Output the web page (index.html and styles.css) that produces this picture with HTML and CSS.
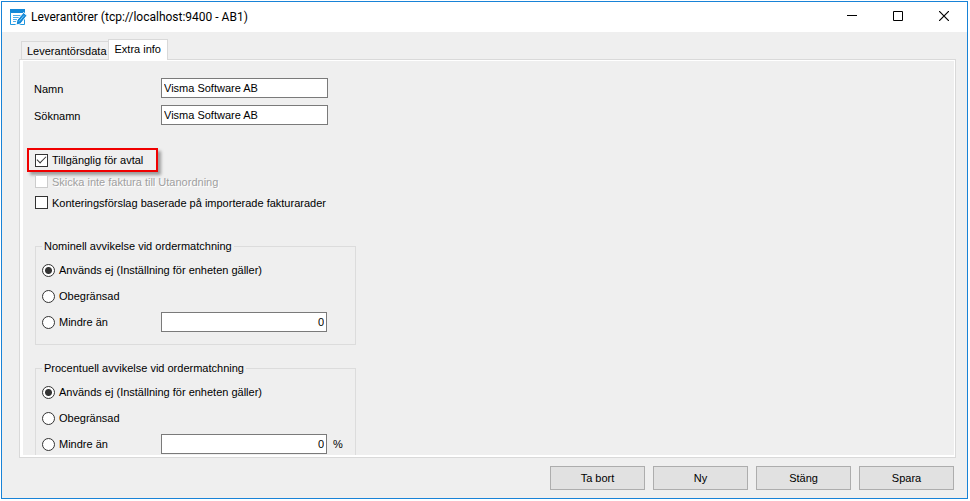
FILE: index.html
```html
<!DOCTYPE html>
<html lang="sv">
<head>
<meta charset="utf-8">
<title>Leverantörer</title>
<link rel="stylesheet" href="styles.css">
</head>
<body>
<div class="window">
  <header class="titlebar">
    <svg class="app-icon" width="17" height="17" viewBox="0 0 17 17" aria-hidden="true">
      <path d="M0 0h15v4H0z" fill="#1489d8"/>
      <path d="M1 4h13v11H1z" fill="#fff"/>
      <path d="M.5 3v12.500h14V3" fill="none" stroke="#1f97e0"/>
      <path d="M3 6.500h8M3 8.500h6M3 10.500h4M3 12.500h3" stroke="#4dacea"/>
      <path d="M6 16l1-5L13.500 3.500l3.500 3L10.500 15z" fill="#1489d8" stroke="#fff"/>
      <path d="M9 12.500l5-6" stroke="#7cc8f2"/>
    </svg>
    <h1 class="title">Leverantörer (tcp://localhost:9400 - AB1)</h1>
    <div class="window-controls">
      <button type="button" class="control" aria-label="Minimera"><svg width="10" height="10" viewBox="0 0 10 10"><path d="M0 4.500h10" stroke="#000"/></svg></button>
      <button type="button" class="control" aria-label="Maximera"><svg width="10" height="10" viewBox="0 0 10 10"><path d="M.5.5h9v9h-9z" fill="none" stroke="#000"/></svg></button>
      <button type="button" class="control" aria-label="Stäng fönstret"><svg width="10" height="10" viewBox="0 0 10 10"><path d="M0 0l10 10M10 0L0 10" stroke="#000" stroke-width="1.200"/></svg></button>
    </div>
  </header>

  <form class="body">
    <div class="tabs" role="tablist">
      <button type="button" class="tab" role="tab" aria-selected="false">Leverantörsdata</button>
      <button type="button" class="tab tab-active" role="tab" aria-selected="true">Extra info</button>
    </div>

    <main class="panel">
      <div class="page">
        <div class="fields">
          <label for="name">Namn</label>
          <input class="textbox" id="name" type="text" value="Visma Software AB">
          <label for="search-name">Söknamn</label>
          <input class="textbox" id="search-name" type="text" value="Visma Software AB">
        </div>

        <div class="checks">
          <label class="option marked"><input type="checkbox" checked>Tillgänglig för avtal</label>
          <label class="option disabled"><input type="checkbox" disabled>Skicka inte faktura till Utanordning</label>
          <label class="option"><input type="checkbox">Konteringsförslag baserade på importerade fakturarader</label>
        </div>

        <fieldset class="group">
          <legend>Nominell avvikelse vid ordermatchning</legend>
          <label class="option wide"><input type="radio" name="nominal" checked>Används ej (Inställning för enheten gäller)</label>
          <label class="option wide"><input type="radio" name="nominal">Obegränsad</label>
          <label class="option"><input type="radio" name="nominal">Mindre än</label>
          <input class="textbox number" type="text" value="0" aria-label="Nominellt belopp">
        </fieldset>

        <fieldset class="group">
          <legend>Procentuell avvikelse vid ordermatchning</legend>
          <label class="option wide"><input type="radio" name="percent" checked>Används ej (Inställning för enheten gäller)</label>
          <label class="option wide"><input type="radio" name="percent">Obegränsad</label>
          <label class="option"><input type="radio" name="percent">Mindre än</label>
          <input class="textbox number" type="text" value="0" aria-label="Procentsats">
          <span>%</span>
        </fieldset>
      </div>
    </main>

    <footer class="actions">
      <button type="button" class="button">Ta bort</button>
      <button type="button" class="button">Ny</button>
      <button type="button" class="button">Stäng</button>
      <button type="button" class="button">Spara</button>
    </footer>
  </form>
</div>
</body>
</html>
```
FILE: styles.css
```css
* {
  box-sizing: border-box;
}

body {
  margin: 0;
  padding: 1px 2px 2px 1px;
  height: 100vh;
  background: #fff;
  color: #000;
  font: 11px/14px "Liberation Sans", Arial, sans-serif;
}

button,
input {
  font: inherit;
  color: inherit;
  margin: 0;
}

.window {
  display: flex;
  flex-direction: column;
  height: 100%;
  border: 1px solid #1883d7;
  background: #efefef;
}

.titlebar {
  display: flex;
  align-items: center;
  height: 30px;
  padding-left: 8px;
  background: #fff;
}

.title {
  flex: 1;
  margin: 0 0 0 4px;
  font: 12px/16px Roboto, "Noto Sans", sans-serif;
}

.window-controls {
  display: flex;
}

.control {
  display: flex;
  align-items: center;
  justify-content: center;
  width: 46px;
  height: 30px;
  padding: 0 0 2px;
  border: 0;
  background: none;
}

.body {
  display: flex;
  flex: 1;
  flex-direction: column;
  min-height: 0;
  padding: 7px 11px 8px 17px;
}

.tabs {
  display: flex;
  align-items: flex-end;
  padding-left: 2px;
}

.tab {
  height: 18px;
  padding: 0 1px 0 5px;
  border: 1px solid #d9d9d9;
  border-width: 1px 0 0 1px;
  background: #f0f0f0;
}

.tab-active {
  position: relative;
  height: 21px;
  margin-bottom: -1px;
  padding: 0 6px 2px;
  border-right-width: 1px;
  background: #fff;
}

.panel {
  flex: 1;
  min-height: 0;
  padding: 1px 1px 2px 3px;
  border: 1px solid #d9d9d9;
  background: #fff;
}

.page {
  height: 100%;
  overflow: hidden;
  padding: 17px 11px 0;
  background: #efefef;
}

.fields {
  display: grid;
  grid-template-columns: 127px 167px;
  align-items: center;
  row-gap: 7px;
}

.fields label {
  padding-top: 2px;
}

.textbox {
  width: 100%;
  height: 20px;
  padding: 0 2px;
  border: 1px solid #7a7a7a;
  border-radius: 0;
  background: #fff;
}

.number {
  text-align: right;
}

.checks {
  display: flex;
  flex-direction: column;
  align-items: flex-start;
  margin: 23px 1px 26px;
}

.option {
  display: flex;
  align-items: center;
  gap: 4px;
  height: 21px;
}

.option input {
  flex: none;
  appearance: none;
  width: 13px;
  height: 13px;
  border: 1px solid #333;
  background: #fff;
}

.option input[type="checkbox"]:checked {
  display: grid;
  place-items: center;
}

.option input[type="checkbox"]:checked::before {
  content: "";
  width: 8px;
  height: 4px;
  margin-bottom: 3px;
  border: solid #333;
  border-width: 0 0 1px 1px;
  transform: rotate(-45deg);
}

.option input[type="radio"] {
  border-radius: 50%;
}

.option input[type="radio"]:checked {
  background: radial-gradient(circle, #333 3px, #fff 4px);
}

.marked {
  height: 24px;
  margin: 0 0 -1px -8px;
  padding: 0 13px 0 6px;
  border: 2px solid #f00000;
  box-shadow: 3px 3px 3px rgba(0, 0, 0, 0.35);
}

.disabled {
  color: #a0a0a0;
  text-shadow: 1px 1px #fff;
}

.disabled input {
  border-color: #ccc;
}

.group {
  display: grid;
  grid-template-columns: 119px 166px auto;
  grid-auto-rows: 26px;
  align-items: center;
  width: 321px;
  margin: 0 0 16px 1px;
  padding: 4px 0 9px 6px;
  border: 1px solid #dcdcdc;
}

.group legend {
  padding: 0 2px;
}

.group .wide {
  grid-column: 1 / -1;
}

.group span {
  padding-left: 6px;
}

.actions {
  display: flex;
  justify-content: flex-end;
  gap: 8px;
  padding: 8px 2px 0 0;
}

.button {
  width: 95px;
  height: 24px;
  padding: 0;
  border: 1px solid #adadad;
  background: #e1e1e1;
}
```
